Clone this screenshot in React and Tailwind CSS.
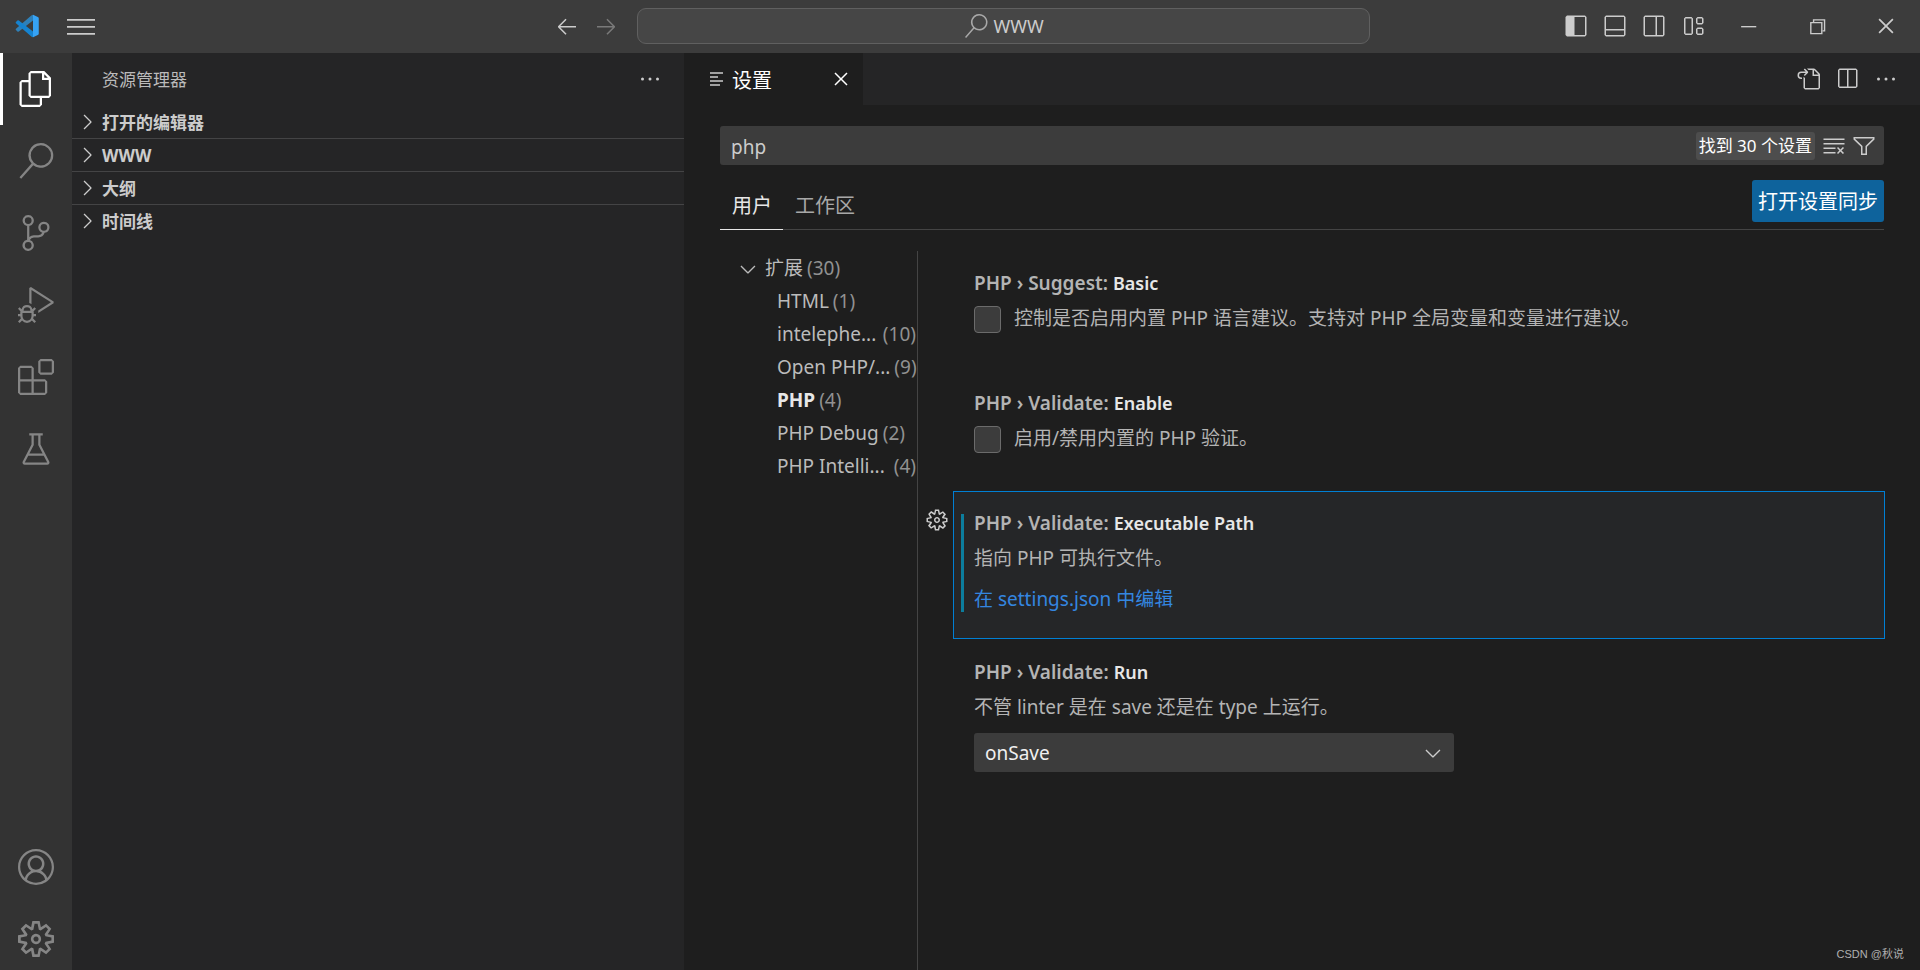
import React, { useState } from 'react';
import {
  VscAccount,
  VscArrowLeft,
  VscArrowRight,
  VscBeaker,
  VscChevronDown,
  VscChevronRight,
  VscChromeClose,
  VscChromeMinimize,
  VscChromeRestore,
  VscClearAll,
  VscClose,
  VscDebugAlt,
  VscEllipsis,
  VscExtensions,
  VscFiles,
  VscFilter,
  VscGear,
  VscGoToFile,
  VscLayout,
  VscLayoutPanelOff,
  VscLayoutSidebarLeft,
  VscLayoutSidebarRightOff,
  VscMenu,
  VscSearch,
  VscSettingsGear,
  VscSourceControl,
  VscSplitHorizontal
} from 'react-icons/vsc';

const activityItems = [
  { id: 'files', label: '资源管理器', icon: VscFiles },
  { id: 'search', label: '搜索', icon: VscSearch },
  { id: 'scm', label: '源代码管理', icon: VscSourceControl },
  { id: 'debug', label: '运行和调试', icon: VscDebugAlt },
  { id: 'extensions', label: '扩展', icon: VscExtensions },
  { id: 'testing', label: '测试', icon: VscBeaker }
];

const sections = ['打开的编辑器', 'WWW', '大纲', '时间线'];

const layoutActions = [
  { label: '切换主侧栏', icon: VscLayoutSidebarLeft },
  { label: '切换面板', icon: VscLayoutPanelOff },
  { label: '切换辅助侧栏', icon: VscLayoutSidebarRightOff },
  { label: '自定义布局', icon: VscLayout }
];

const windowActions = [
  { label: '最小化', icon: VscChromeMinimize },
  { label: '还原', icon: VscChromeRestore },
  { label: '关闭', icon: VscChromeClose }
];

const tocItems = [
  { name: 'HTML', count: 1 },
  { name: 'intelephe...', count: 10, clipped: true },
  { name: 'Open PHP/...', count: 9, clipped: true },
  { name: 'PHP', count: 4, active: true },
  { name: 'PHP Debug', count: 2 },
  { name: 'PHP Intelli...', count: 4, clipped: true }
];

const Logo = () => (
  <svg viewBox="0 0 100 100" className="h-6 w-6">
    <path fill="#2f80b8" d="M4 67 10 73Q13 75 16 73L75 27V4Q71 3 68 6L4 61Q1 64 4 67Z" />
    <path fill="#1583d0" d="M4 33 10 27Q13 25 16 27L75 73V96Q71 97 68 94L4 39Q1 36 4 33Z" />
    <path fill="#36a3f5" d="M71 99Q75 99 75 96V4Q75 1 71 1L95 12Q99 14 99 18V82Q99 86 95 88Z" />
  </svg>
);

const TitleBar = () => (
  <header className="flex h-[53px] shrink-0 items-center bg-[#3c3c3c] pb-px text-[#cccccc]">
    <div className="flex w-[33.2%] items-center pl-[15px]">
      <Logo />
      <button aria-label="菜单" className="ml-7">
        <VscMenu className="h-7 w-7" />
      </button>
      <div className="ml-auto flex gap-[15px] pr-[19px]">
        <button aria-label="后退"><VscArrowLeft className="h-6 w-6" /></button>
        <button aria-label="前进" className="text-[#7a7a7a]"><VscArrowRight className="h-6 w-6" /></button>
      </div>
    </div>
    <button className="flex h-9 flex-1 items-center justify-center gap-1.5 rounded-[9px] border border-[#606060] bg-[#464646] text-[18px]">
      <VscSearch className="h-6 w-6 text-[#a8a8a8]" />
      <span>WWW</span>
    </button>
    <div className="flex w-[550px] shrink-0 items-center justify-end">
      <div className="flex gap-[15px] pr-2">
        {layoutActions.map(({ label, icon: Icon }) => (
          <button key={label} aria-label={label}><Icon className="h-6 w-6" /></button>
        ))}
      </div>
      {windowActions.map(({ label, icon: Icon }) => (
        <button key={label} aria-label={label} className="flex h-[52px] w-[69px] items-center justify-center">
          <Icon className="h-[22px] w-[22px]" />
        </button>
      ))}
    </div>
  </header>
);

const ActivityBar = ({ active, onSelect }) => (
  <nav className="flex w-[72px] shrink-0 flex-col justify-between bg-[#333333] text-[#858585]">
    <div className="flex flex-col">
      {activityItems.map(({ id, label, icon: Icon }) => (
        <button
          key={id}
          aria-label={label}
          onClick={() => onSelect(id)}
          className={`flex h-[72px] items-center justify-center border-l-[3px] pr-[3px] ${
            active === id ? 'border-white text-white' : 'border-transparent'
          }`}
        >
          <Icon className="h-9 w-9" />
        </button>
      ))}
    </div>
    <div className="-mb-[5px] flex flex-col">
      <button aria-label="帐户" className="flex h-[72px] items-center justify-center">
        <VscAccount className="h-9 w-9" />
      </button>
      <button aria-label="管理" className="flex h-[72px] items-center justify-center">
        <VscSettingsGear className="h-9 w-9" />
      </button>
    </div>
  </nav>
);

const SideBar = () => (
  <aside className="w-[612px] shrink-0 bg-[#252526] text-[#cccccc]">
    <div className="flex h-[52px] items-center justify-between pl-[30px] pr-[22px]">
      <h2 className="pt-0.5 text-[17px] text-[#bbbbbb]">资源管理器</h2>
      <button aria-label="更多操作"><VscEllipsis className="h-6 w-6" /></button>
    </div>
    {sections.map((name, index) => (
      <button
        key={name}
        className={`flex h-[33px] w-full items-center border-t pl-[3px] text-[17px] font-bold ${
          index === 0 ? 'border-transparent' : 'border-[#444445]'
        }`}
      >
        <VscChevronRight className="mr-[3px] h-6 w-6" />
        <span className="pt-0.5">{name}</span>
      </button>
    ))}
  </aside>
);

const TabBar = () => (
  <div className="flex h-[52px] shrink-0 justify-between bg-[#252526] text-[#cccccc]">
    <div className="flex w-[179px] items-center bg-[#1e1e1e] pl-[26px] pr-2.5">
      <svg viewBox="0 0 13 14" className="mr-[9px] h-3.5 w-[13px]" stroke="currentColor" strokeWidth="1.5">
        <path d="M0 1h13M0 5h8M0 9h13M0 13h10" />
      </svg>
      <span className="pt-1 text-[20px] text-white">设置</span>
      <button aria-label="关闭" className="ml-auto text-white"><VscClose className="h-6 w-6" /></button>
    </div>
    <div className="flex items-center gap-[15px] pr-[22px]">
      <button aria-label="打开设置(json)"><VscGoToFile className="h-6 w-6" /></button>
      <button aria-label="向右拆分编辑器"><VscSplitHorizontal className="h-6 w-6" /></button>
      <button aria-label="更多操作"><VscEllipsis className="h-6 w-6" /></button>
    </div>
  </div>
);

const TocTree = () => (
  <div className="w-[198px] shrink-0 border-r border-[#444444] text-[19px] text-[#bbbbbb]">
    <button className="flex h-[33px] w-full items-center pl-4 pt-0.5">
      <VscChevronDown className="mr-[5px] h-6 w-6" />
      扩展 <span className="ml-1 text-[#919191]">(30)</span>
    </button>
    {tocItems.map(({ name, count, active, clipped }) => (
      <button
        key={name}
        className={`flex h-[33px] w-full items-center gap-1 whitespace-nowrap pl-[57px] pr-px pt-0.5 ${
          clipped ? 'justify-between' : ''
        }`}
      >
        <span className={active ? 'font-bold text-[#e7e7e7]' : ''}>{name}</span>
        <span className="text-[#919191]">({count})</span>
      </button>
    ))}
  </div>
);

const SettingTitle = ({ category, name }) => (
  <h3 className="h-[26px] font-semibold leading-[26px] text-[#b4b4b4]">
    PHP › {category}: <span className="text-[18px] text-[#e7e7e7]">{name}</span>
  </h3>
);

const CheckSetting = ({ id, category, name, description }) => (
  <section className="h-[120px] pl-[21px] pt-[19px]">
    <SettingTitle category={category} name={name} />
    <div className="mt-[9px] flex items-start gap-[13px]">
      <input
        id={id}
        type="checkbox"
        className="mt-px h-[27px] w-[27px] shrink-0 appearance-none rounded-[4px] border border-[#6b6b6b] bg-[#3c3c3c] checked:bg-[#0e639c]"
      />
      <label htmlFor={id} className="leading-[26px]">{description}</label>
    </div>
  </section>
);

const SettingsList = () => (
  <div className="min-w-0 flex-1 pl-[35px] text-[19px] text-[#b4b4b4]">
    <CheckSetting
      id="suggest-basic"
      category="Suggest"
      name="Basic"
      description="控制是否启用内置 PHP 语言建议。支持对 PHP 全局变量和变量进行建议。"
    />
    <CheckSetting
      id="validate-enable"
      category="Validate"
      name="Enable"
      description="启用/禁用内置的 PHP 验证。"
    />
    {/* Focused setting, with the gear in the gutter */}
    <section className="relative -mr-px flex h-[148px] border border-[#007fd4] bg-[#252628] pl-[7px]">
      <button aria-label="更多操作" className="absolute -left-[29px] top-4 text-[#cccccc]">
        <VscGear className="h-6 w-6" />
      </button>
      <div className="mt-[22px] h-[98px] w-[3px] bg-[#0c7d9d]" />
      <div className="pl-[10px] pt-[18px]">
        <SettingTitle category="Validate" name="Executable Path" />
        <p className="mt-[9px] leading-[26px]">指向 PHP 可执行文件。</p>
        <a href="#settings.json" className="mt-[15px] block leading-[26px] text-[#3486e0]">在 settings.json 中编辑</a>
      </div>
    </section>
    <section className="pl-[21px] pt-5">
      <SettingTitle category="Validate" name="Run" />
      <label htmlFor="validate-run" className="mt-[9px] block leading-[26px]">不管 linter 是在 save 还是在 type 上运行。</label>
      <div className="relative mt-[13px] w-[480px] max-w-full">
        <select
          id="validate-run"
          defaultValue="onSave"
          className="h-[39px] w-full appearance-none rounded-[3px] bg-[#3c3c3c] px-[11px] pt-0.5 text-[#f0f0f0]"
        >
          <option>onSave</option>
          <option>onType</option>
        </select>
        <VscChevronDown className="pointer-events-none absolute right-[9px] top-2 h-6 w-6 text-[#cccccc]" />
      </div>
    </section>
  </div>
);

const SettingsEditor = () => {
  const [query, setQuery] = useState('php');

  return (
    <div className="flex min-h-0 flex-1 flex-col px-9 pt-[21px]">
      <div className="flex h-[39px] shrink-0 items-center rounded-[3px] bg-[#3c3c3c] pl-[11px] pr-2 text-[#cccccc]">
        <input
          aria-label="搜索设置"
          value={query}
          onChange={(e) => setQuery(e.target.value)}
          className="min-w-0 flex-1 bg-transparent pt-1 text-[19px] outline-none"
        />
        <span className="rounded-[3px] bg-[#4d4d4d] px-[3px] text-[17px] leading-7 text-white">找到 30 个设置</span>
        <button aria-label="清除设置搜索" className="ml-[7px]"><VscClearAll className="h-6 w-6" /></button>
        <button aria-label="筛选设置" className="ml-1.5"><VscFilter className="h-6 w-6" /></button>
      </div>
      <div className="flex h-[65px] shrink-0 justify-between border-b border-[#444444] text-[20px]">
        <div className="flex items-end">
          <button className="-mb-px h-[50px] border-b border-[#e7e7e7] pl-3 pr-[11px] pt-0.5 text-[#e7e7e7]">用户</button>
          <button className="-mb-px h-[50px] border-b border-transparent pl-3 pr-[11px] pt-0.5 text-[#a8a8a8]">工作区</button>
        </div>
        <button className="mt-[15px] h-[42px] rounded-[3px] bg-[#0e639c] px-1.5 pt-0.5 text-white">打开设置同步</button>
      </div>
      <div className="mt-[21px] flex min-h-0 flex-1">
        <TocTree />
        <SettingsList />
      </div>
    </div>
  );
};

const App = () => {
  const [active, setActive] = useState('files');

  return (
    <div className="relative flex h-screen flex-col overflow-hidden bg-[#1e1e1e] font-['Noto_Sans','Noto_Sans_CJK_SC',sans-serif]">
      <TitleBar />
      <div className="flex min-h-0 flex-1">
        <ActivityBar active={active} onSelect={setActive} />
        <SideBar />
        <main className="flex min-w-0 flex-1 flex-col">
          <TabBar />
          <SettingsEditor />
        </main>
      </div>
      <span className="absolute bottom-2 right-4 font-['Liberation_Sans','Noto_Sans_CJK_SC',sans-serif] text-[11px] leading-4 text-[#b0b0b0]">CSDN @秋说</span>
    </div>
  );
};

export default App;
